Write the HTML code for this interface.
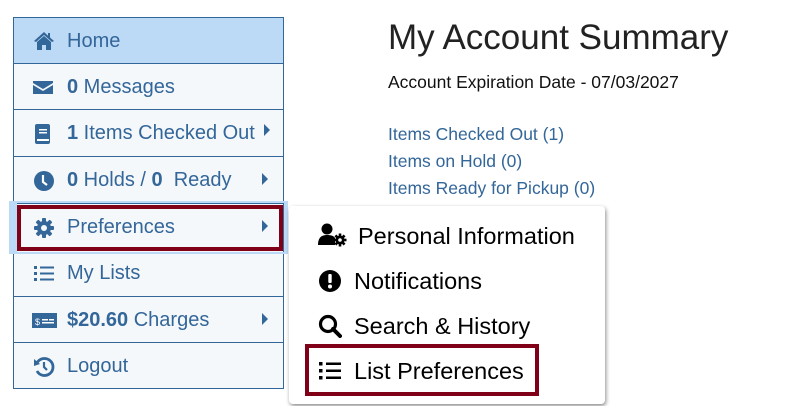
<!DOCTYPE html>
<html><head><meta charset="utf-8"><style>
*{margin:0;padding:0;box-sizing:border-box}
body{width:790px;height:406px;background:#fff;font-family:"Liberation Sans",sans-serif;position:relative;overflow:hidden}
.side{position:absolute;left:13px;top:17px;width:271px;height:372px;border:1px solid #336699;background:#f5f8fb}
.row{position:absolute;left:0;width:269px;height:46px;border-bottom:1px solid #336699;color:#336699;font-size:20px}
.row .t{position:absolute;left:53px;top:12px;white-space:nowrap}
.row svg{position:absolute;left:19px;top:13px}
.row .car{position:absolute;left:248px;top:16px;width:0;height:0;border-top:6px solid transparent;border-bottom:6px solid transparent;border-left:6px solid #336699}
b{font-weight:bold}
.pop{position:absolute;left:289px;top:206px;width:316px;height:198px;background:#fff;border-radius:4px;box-shadow:1px 2px 4px rgba(0,0,0,.45)}
.pi{position:absolute;font-size:23.5px;color:#000;white-space:nowrap}
a{color:#336699;text-decoration:none}
</style></head><body>
<div class="side">
<div class="row" style="top:0;background:#bcd9f5"><svg width="22" height="20" viewBox="0 0 22 20"><path d="M11 1 L1 10 L3 11 L11 4 L19 11 L21 10 L17 6.5 V2 H15 V4.7Z M4 11 L11 5 L18 11 V19 H13 V14 H9 V19 H4Z" fill="#336699"/></svg><span class="t">Home</span></div>
<div class="row" style="top:46px"><svg width="20" height="20" viewBox="0 0 20 20"><path d="M0 4 H20 V6 L10 12 L0 6Z M0 8 L10 14 L20 8 V17 H0Z" fill="#336699"/></svg><span class="t"><b>0</b> Messages</span></div>
<div class="row" style="top:92px;height:47px"><svg width="20" height="22" viewBox="0 0 20 22"><rect x="2" y="1" width="15" height="20" rx="2" fill="#336699"/><rect x="6" y="6" width="8" height="1.5" fill="#fff"/><rect x="6" y="9" width="8" height="1.5" fill="#fff"/><rect x="4" y="16" width="12" height="2" fill="#fff"/></svg><span class="t"><b>1</b> Items Checked Out</span><span class="car" style="left:250px;top:14px"></span></div>
<div class="row" style="top:139px;height:47px"><svg width="22" height="22" viewBox="0 0 22 22"><circle cx="11" cy="11" r="10" fill="#336699"/><path d="M10 5 V12 L14 15" stroke="#fff" stroke-width="2.2" fill="none"/></svg><span class="t"><b>0</b> Holds / <b>0</b>&nbsp; Ready</span><span class="car"></span></div>
<div class="row" style="top:186px"><svg width="22" height="22" viewBox="0 0 22 22"><g fill="#336699"><circle cx="11" cy="11" r="7"/><rect x="9" y="1" width="4" height="20" rx="1"/><rect x="1" y="9" width="20" height="4" rx="1"/><rect x="9" y="1" width="4" height="20" rx="1" transform="rotate(45 11 11)"/><rect x="9" y="1" width="4" height="20" rx="1" transform="rotate(-45 11 11)"/></g><circle cx="11" cy="11" r="3" fill="#f5f8fb"/></svg><span class="t">Preferences</span><span class="car"></span></div>
<div class="row" style="top:232px;height:47px"><svg width="22" height="20" viewBox="0 0 22 20"><g fill="#336699"><rect x="1" y="3" width="3" height="3"/><rect x="1" y="9" width="3" height="3"/><rect x="1" y="15" width="3" height="3"/><rect x="7" y="3.5" width="14" height="2"/><rect x="7" y="9.5" width="14" height="2"/><rect x="7" y="15.5" width="14" height="2"/></g></svg><span class="t">My Lists</span></div>
<div class="row" style="top:279px"><svg width="25" height="20" viewBox="0 0 25 20" style="left:18px"><rect x="0" y="3" width="25" height="15" fill="#336699"/><text x="3" y="15" font-size="9" fill="#fff" font-family="Liberation Sans">$</text><rect x="10" y="9" width="6" height="1.5" fill="#fff"/><rect x="17" y="9" width="5" height="1.5" fill="#fff"/><rect x="10" y="12" width="12" height="1.5" fill="#fff"/></svg><span class="t"><b>$20.60</b> Charges</span><span class="car"></span></div>
<div class="row" style="top:325px;border-bottom:none"><svg width="22" height="22" viewBox="0 0 22 22"><path d="M4 7 A8.5 8.5 0 1 1 4 15" stroke="#336699" stroke-width="2.8" fill="none"/><path d="M1 3 L7 8 L1 10Z" fill="#336699"/><path d="M11 6 V11 L14 14" stroke="#336699" stroke-width="2.2" fill="none"/></svg><span class="t">Logout</span></div>
</div>
<div style="position:absolute;left:9px;top:201px;width:279px;height:53px;border:2px solid #bcd9f5;border-left-width:8px;border-right-width:4px"></div>
<div style="position:absolute;left:17px;top:205px;width:266px;height:46px;border:4px solid #800018"></div>
<div style="position:absolute;left:388px;top:18px;font-size:35px;color:#222">My Account Summary</div>
<div style="position:absolute;left:388px;top:72px;font-size:17.5px;color:#111">Account Expiration Date - 07/03/2027</div>
<div style="position:absolute;left:388px;top:121px;font-size:17.5px;line-height:27px"><a>Items Checked Out (1)</a><br><a>Items on Hold (0)</a><br><a>Items Ready for Pickup (0)</a></div>
<div class="pop">
<svg style="position:absolute;left:29px;top:17px" width="30" height="24" viewBox="0 0 30 24"><circle cx="9" cy="6" r="5.5"/><path d="M0 22 C0 14 4 12 9 12 C13 12 16 13 17 15 V22Z"/><g transform="translate(22 17)"><circle r="4.5"/><rect x="-1.3" y="-6.5" width="2.6" height="13"/><rect x="-6.5" y="-1.3" width="13" height="2.6"/><rect x="-1.3" y="-6.5" width="2.6" height="13" transform="rotate(45)"/><rect x="-1.3" y="-6.5" width="2.6" height="13" transform="rotate(-45)"/><circle r="1.8" fill="#fff"/></g></svg>
<div class="pi" style="left:69px;top:17px">Personal Information</div>
<svg style="position:absolute;left:29px;top:63px" width="24" height="24" viewBox="0 0 24 24"><circle cx="12" cy="12" r="11"/><rect x="10.3" y="5" width="3.4" height="9" rx="1" fill="#fff"/><circle cx="12" cy="17.5" r="2" fill="#fff"/></svg>
<div class="pi" style="left:65px;top:62px">Notifications</div>
<svg style="position:absolute;left:29px;top:108px" width="24" height="24" viewBox="0 0 24 24"><circle cx="10" cy="10" r="7.5" stroke="#000" stroke-width="3.2" fill="none"/><path d="M15 15 L22 22" stroke="#000" stroke-width="4" stroke-linecap="round"/></svg>
<div class="pi" style="left:65px;top:107px">Search &amp; History</div>
<svg style="position:absolute;left:29px;top:155px" width="24" height="20" viewBox="0 0 24 20"><rect x="1" y="1" width="3.5" height="3.5"/><rect x="1" y="8" width="3.5" height="3.5"/><rect x="1" y="15" width="3.5" height="3.5"/><rect x="8" y="1.5" width="15" height="2.5"/><rect x="8" y="8.5" width="15" height="2.5"/><rect x="8" y="15.5" width="15" height="2.5"/></svg>
<div class="pi" style="left:65px;top:152px">List Preferences</div>
<div style="position:absolute;left:16px;top:138px;width:234px;height:52px;border:4px solid #800018"></div>
</div>
</body></html>
